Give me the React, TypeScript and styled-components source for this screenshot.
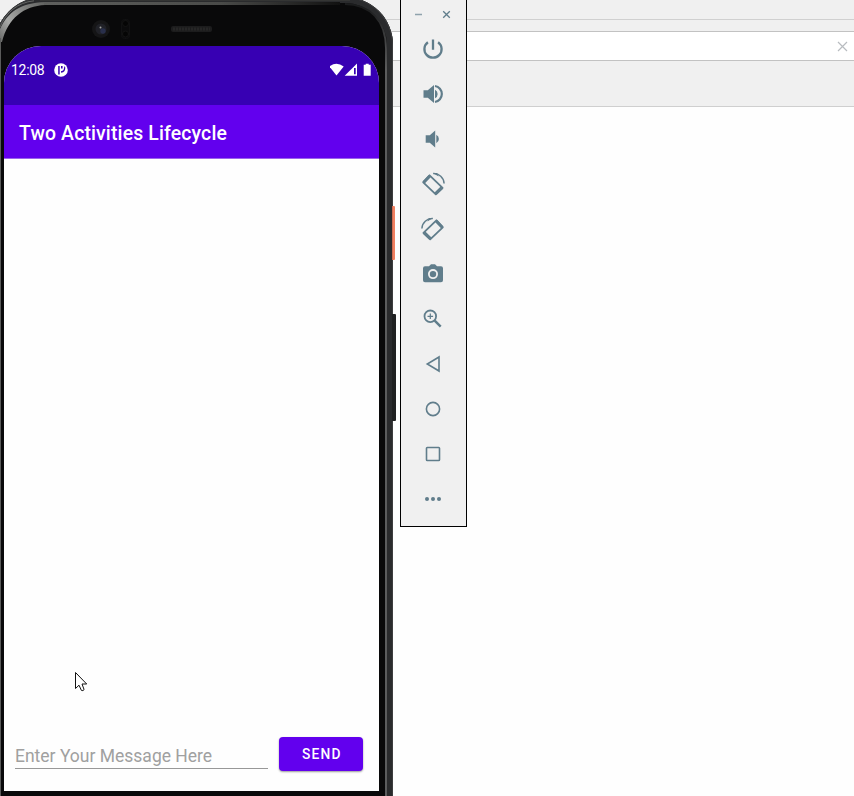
import React from 'react';
import styled, { createGlobalStyle } from 'styled-components';

const ink = '#607d8b';

const GlobalStyle = createGlobalStyle`
  *, *::before, *::after { box-sizing: border-box; }
  body { margin: 0; overflow: hidden; font-family: Roboto, "Liberation Sans", sans-serif; }
`;

const Desktop = styled.div`
  position: relative;
  width: 854px;
  height: 796px;
  overflow: hidden;
  background: #fefefe;
  display: flex;
  flex-direction: column;
`;

const TitleStrip = styled.div`
  height: 20px;
  flex: none;
  background: #f0f0f0;
  border-bottom: 1px solid #d0d0d0;
`;

const TabStrip = styled.div`
  height: 11px;
  flex: none;
  background: #f0f0f0;
`;

const SearchStrip = styled.div`
  height: 30px;
  flex: none;
  display: flex;
  align-items: center;
  justify-content: flex-end;
  padding-right: 6px;
  background: #fff;
  border-top: 1px solid #c2c2c2;
  border-bottom: 1px solid #c2c2c2;
`;

const ToolStrip = styled.div`
  height: 46px;
  flex: none;
  background: #f0f0f0;
  border-bottom: 1px solid #cfcfcf;
`;

const PhoneWindow = styled.div`
  position: absolute;
  left: -6px;
  top: -3px;
  width: 399px;
  height: 840px;
  padding: 49px 14px 0 10px;
  border-radius: 50px 48px 0 0;
  background: #09090a;
  box-shadow: inset 0 0 0 1px #3c3d3e, inset 0 0 0 6px #2a2b2d;
`;

const ShellArt = styled.svg`
  position: absolute;
  left: 6px;
  top: 3px;
`;

const SideKey = styled.div<{ $top: number; $height: number; $color: string; $width: number }>`
  position: absolute;
  left: 392px;
  top: ${p => p.$top}px;
  width: ${p => p.$width}px;
  height: ${p => p.$height}px;
  border-radius: 0 1px 1px 0;
  background: ${p => p.$color};
`;

const Screen = styled.div`
  position: relative;
  height: 745px;
  overflow: hidden;
  display: flex;
  flex-direction: column;
  border-radius: 37px 37px 0 0;
  background: #fefefe;
`;

const StatusBar = styled.div`
  height: 59px;
  flex: none;
  display: flex;
  align-items: flex-start;
  justify-content: space-between;
  padding: 15px 6px 0 7px;
  background: #3700b3;
  color: #fff;
`;

const StatusGroup = styled.div`
  display: flex;
  align-items: center;
  gap: 10px;
  height: 17px;
`;

const Clock = styled.span`
  padding-top: 1px;
  font-size: 14px;
  line-height: 17px;
  letter-spacing: -0.3px;
`;

const AppBar = styled.div`
  height: 54px;
  flex: none;
  display: flex;
  align-items: center;
  padding: 4px 15px 0;
  background: #6200ee;
  border-bottom: 1px solid #9b63ec;
  color: #fff;
`;

const AppTitle = styled.h1`
  margin: 0;
  font-size: 19.4px;
  font-weight: 500;
  line-height: 24px;
  letter-spacing: 0.15px;
  white-space: nowrap;
`;

const Messages = styled.div`
  flex: 1;
`;

const Composer = styled.div`
  display: flex;
  align-items: flex-start;
  gap: 11px;
  height: 55px;
  padding: 0 16px 0 11px;
`;

const MessageField = styled.div`
  width: 253px;
  flex: none;
  height: 33px;
  padding-top: 10px;
  border-bottom: 1px solid #989898;
  color: #a0a0a0;
  font-size: 17.5px;
  line-height: 21px;
  white-space: nowrap;
`;

const SendButton = styled.button`
  width: 84px;
  flex: none;
  height: 34px;
  margin-top: 0.5px;
  margin-left: 0.4px;
  padding: 0 0 0 1px;
  border: 0;
  border-radius: 4px;
  background: #6200ee;
  box-shadow: 0 1px 2px rgba(0, 0, 0, 0.4);
  color: #fff;
  font: 500 13.8px/34px Roboto, sans-serif;
  letter-spacing: 1.2px;
`;

const EmulatorPanel = styled.div`
  position: absolute;
  left: 400px;
  top: -1px;
  width: 67px;
  height: 528px;
  border: 1px solid #000;
  background: #f0f0f0;
  color: ${ink};
`;

const WindowControls = styled.div`
  display: flex;
  justify-content: space-between;
  padding: 7.5px 15px 0 13px;
  height: 26px;
`;

const ToolList = styled.div`
  display: flex;
  flex-direction: column;
  align-items: center;
  padding-right: 1px;
`;

const ToolButton = styled.div`
  width: 45px;
  height: 45px;
  display: grid;
  place-items: center;
`;

const Pointer = styled.svg`
  position: absolute;
  left: 74px;
  top: 671px;
`;

const RotateArt = () => (
  <g fill="none" stroke={ink}>
    <path d="M2.2 10.3 8.6 3.3 21.6 15.8 14.8 22.3z" strokeWidth="1.8" strokeLinejoin="round" />
    <path d="M2.6 10.5 8.8 4M14.6 21.6 21 15.5" strokeWidth="3.2" />
    <path d="M12.2 1.6A10.3 10.3 0 0 1 23.1 11.5" strokeWidth="1.5" />
    <path d="M12 1h4l1.6 3.6z" fill={ink} stroke="none" />
  </g>
);

const tools = [
  <path key="power" d="M12 2.4v10.3M6.9 5.2A8.6 8.6 0 1 0 17.1 5.2" fill="none" stroke={ink} strokeWidth="2.3" />,
  <g key="up" fill={ink}><path d="M2.5 8.2h4.3L13 3v18l-6.2-5.2H2.5z" /><path d="M14 7.7a4.8 4.8 0 0 1 0 8.6z" /><path d="M14 4a8.1 8.1 0 0 1 0 16" fill="none" stroke={ink} strokeWidth="2.2" /></g>,
  <g key="down" fill={ink}><path d="M4.7 8.2h4.1l5.4-4.7v17l-5.4-4.7H4.7z" /><path d="M15.3 7.8a4.7 4.7 0 0 1 0 8.4z" /></g>,
  <RotateArt key="left" />,
  <g key="right" transform="matrix(-1 0 0 1 24 0)"><RotateArt /></g>,
  <g key="camera" fill={ink}><path fillRule="evenodd" d="M4 4.3h4l2-2h4l2 2h4q2 0 2 2v12q0 2-2 2H4q-2 0-2-2v-12q0-2 2-2zm8 2.8a5 5 0 1 0 0 10 5 5 0 0 0 0-10z" /><circle cx="12" cy="12.1" r="3.2" /></g>,
  <g key="zoom" fill="none" stroke={ink}><circle cx="9.3" cy="9.3" r="5.8" strokeWidth="1.8" /><path d="M9.3 6.5v5.6M6.5 9.3h5.6" strokeWidth="1.2" /><path d="m13.7 13.7 6 6" strokeWidth="2.5" /></g>,
  <path key="back" d="M18 5v14L6.3 12z" fill="none" stroke={ink} strokeWidth="1.6" />,
  <circle key="home" cx="12" cy="12" r="6.6" fill="none" stroke={ink} strokeWidth="1.6" />,
  <rect key="overview" x="5.5" y="5.5" width="13" height="13" rx="0.8" fill="none" stroke={ink} strokeWidth="1.6" />,
  <g key="more" fill={ink}><circle cx="6" cy="12" r="2" /><circle cx="12" cy="12" r="2" /><circle cx="18" cy="12" r="2" /></g>,
];

export default function App() {
  return (
    <>
      <GlobalStyle />
      <Desktop>
        <TitleStrip />
        <TabStrip />
        <SearchStrip>
          <svg width="11" height="11" viewBox="0 0 11 11"><path d="m1 1 9 9M10 1l-9 9" stroke="#b8bcc0" strokeWidth="1.2" /></svg>
        </SearchStrip>
        <ToolStrip />

        <PhoneWindow>
          <ShellArt width="393" height="796" viewBox="0 0 393 796">
            <defs>
              <linearGradient id="sheen" gradientUnits="userSpaceOnUse" x1="0" y1="40" x2="48" y2="4">
                <stop offset="0" stopColor="#6c6d6c" /><stop offset=".3" stopColor="#a9aaa8" /><stop offset=".65" stopColor="#80817f" /><stop offset="1" stopColor="#5f605e" />
              </linearGradient>
              <linearGradient id="topEdge" gradientUnits="userSpaceOnUse" x1="40" y1="0" x2="340" y2="0">
                <stop offset="0" stopColor="#5f605e" /><stop offset=".6" stopColor="#4a4b49" /><stop offset="1" stopColor="#111" />
              </linearGradient>
              <linearGradient id="rail" gradientUnits="userSpaceOnUse" x1="0" y1="8" x2="0" y2="70">
                <stop offset="0" stopColor="#1b1c1d" /><stop offset="1" stopColor="#646566" />
              </linearGradient>
            </defs>
            <path d="M0 27C6 13 17 2.5 34 .8" fill="none" stroke="#656665" strokeWidth="1" />
            <path d="M0 29C8 12 20 3 45 2v3C24 6 8 18 2 42H0z" fill="url(#sheen)" />
            <path d="M40 .5h310" stroke="#343534" strokeWidth="1" />
            <rect x="44" y="2" width="296" height="3" fill="url(#topEdge)" />
            <path d="M.5 38v758" stroke="#5a5b5a" strokeWidth="1" />
            <path d="M386 796V49C386 20 370 4.5 345 4" fill="none" stroke="url(#rail)" strokeWidth="1.8" />
            <circle cx="101" cy="29" r="9" fill="#151516" />
            <circle cx="101" cy="29" r="5.5" fill="#202127" />
            <circle cx="103" cy="31" r="2.7" fill="#292f4b" />
            <circle cx="100.5" cy="27.5" r="1" fill="#a0a0a0" />
            <rect x="121.5" y="19.5" width="8" height="19" rx="3" fill="#0b0b0c" stroke="#111112" />
            <circle cx="125.5" cy="23.5" r="3" fill="#050505" stroke="#141414" />
            <circle cx="125.5" cy="34" r="3" fill="#050505" stroke="#141414" />
            <rect x="171" y="26" width="41" height="6" rx="2" fill="#1c1c1d" />
            <path d="M173 29h37" stroke="#262626" strokeWidth="3" strokeDasharray="2 1" />
          </ShellArt>
          <Screen>
            <StatusBar>
              <StatusGroup>
                <Clock>12:08</Clock>
                <svg width="14" height="14" viewBox="0 0 14 14"><circle cx="7" cy="7" r="6.8" fill="#fff" /><path d="M4.2 3h1.5v8.5H4.2zM7 3h1.6v2.6H7zM7 8.2Q10.4 8 10.2 3.2L11.2 4Q12 9 7 9.8z" fill="#3700b3" /></svg>
              </StatusGroup>
              <StatusGroup>
                <svg width="43" height="14" viewBox="0 0 43 14" fill="#fff">
                  <path d="M-.7 3.4Q6.5-2 13.7 3.4L6.5 12.5z" />
                  <path d="M27 .4v12.3H14.7z" />
                  <path d="M24 5h1.7v6.3H24z" fill="#3700b3" />
                  <path d="M35.7.7h3v1.1h2v11h-7v-11h2z" />
                </svg>
              </StatusGroup>
            </StatusBar>
            <AppBar><AppTitle>Two Activities Lifecycle</AppTitle></AppBar>
            <Messages />
            <Composer>
              <MessageField>Enter Your Message Here</MessageField>
              <SendButton>SEND</SendButton>
            </Composer>
          </Screen>
        </PhoneWindow>
        <SideKey $top={206} $height={54} $width={3} $color="linear-gradient(90deg, #b96048, #f08061 50%)" />
        <SideKey $top={314} $height={107} $width={4} $color="#202122" />

        <EmulatorPanel>
          <WindowControls>
            <svg width="9" height="13" viewBox="0 0 9 13"><path d="M1 6.5h7" stroke="#8fa2ac" strokeWidth="1.5" /></svg>
            <svg width="9" height="13" viewBox="0 0 9 13"><path d="m1.2 3.2 6.6 6.6M7.8 3.2 1.2 9.8" stroke={ink} strokeWidth="1.3" /></svg>
          </WindowControls>
          <ToolList>
            {tools.map((art, i) => (
              <ToolButton key={i}><svg width="24" height="24" viewBox="0 0 24 24">{art}</svg></ToolButton>
            ))}
          </ToolList>
        </EmulatorPanel>

        <Pointer width="14" height="22" viewBox="0 0 14 22">
          <path d="M1.5 1.5v16l3.5-3.3 2.4 5.2q1.6.8 2.7-.8L8 13h4.7z" fill="#fff" stroke="#111" strokeWidth="1" />
        </Pointer>
      </Desktop>
    </>
  );
}
